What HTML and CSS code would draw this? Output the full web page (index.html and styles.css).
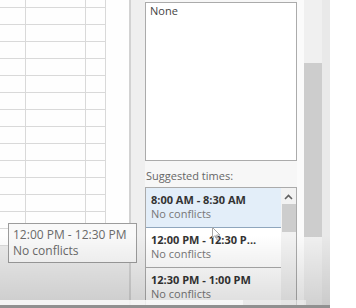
FILE: index.html
```html
<!DOCTYPE html>
<html lang="en">
<head>
<meta charset="utf-8">
<title>Suggested times</title>
<link rel="stylesheet" href="styles.css">
</head>
<body>
<div class="app">
  <div class="calendar">
    <div class="cal-top">
      <div class="grid">
        <div class="row first"><div class="c1"></div><div class="c2"></div><div class="c3"></div></div>
        <div class="row"><div class="c1"></div><div class="c2"></div><div class="c3"></div></div>
        <div class="row"><div class="c1"></div><div class="c2"></div><div class="c3"></div></div>
        <div class="row"><div class="c1"></div><div class="c2"></div><div class="c3"></div></div>
        <div class="row"><div class="c1"></div><div class="c2"></div><div class="c3"></div></div>
        <div class="row"><div class="c1"></div><div class="c2"></div><div class="c3"></div></div>
        <div class="row"><div class="c1"></div><div class="c2"></div><div class="c3"></div></div>
        <div class="row"><div class="c1"></div><div class="c2"></div><div class="c3"></div></div>
        <div class="row"><div class="c1"></div><div class="c2"></div><div class="c3"></div></div>
        <div class="row"><div class="c1"></div><div class="c2"></div><div class="c3"></div></div>
        <div class="row"><div class="c1"></div><div class="c2"></div><div class="c3"></div></div>
        <div class="row"><div class="c1"></div><div class="c2"></div><div class="c3"></div></div>
        <div class="row"><div class="c1"></div><div class="c2"></div><div class="c3"></div></div>
        <div class="row"><div class="c1"></div><div class="c2"></div><div class="c3"></div></div>
        <div class="row"><div class="c1"></div><div class="c2"></div><div class="c3"></div></div>
      </div>
    </div>
    <div class="cal-bottom"></div>
  </div>
  <div class="divider"></div>
  <div class="gutter"></div>
  <div class="panel">
    <div class="none-box">None</div>
    <div class="label">Suggested times:</div>
    <div class="list">
      <div class="items">
        <div class="item active">
          <div class="time">8:00 AM - 8:30 AM</div>
          <div class="status">No conflicts</div>
        </div>
        <div class="item">
          <div class="time">12:00 PM - 12:30 P...</div>
          <div class="status">No conflicts</div>
        </div>
        <div class="item">
          <div class="time">12:30 PM - 1:00 PM</div>
          <div class="status">No conflicts</div>
        </div>
      </div>
      <div class="list-scroll">
        <div class="arrow">
          <svg width="9" height="6" viewBox="0 0 9 6"><path d="M1 5 L4.5 1.5 L8 5" fill="none" stroke="#606060" stroke-width="1.6"/></svg>
        </div>
        <div class="list-thumb"></div>
      </div>
    </div>
  </div>
  <div class="gap"></div>
  <div class="vscroll"><div class="vthumb"></div></div>
  <div class="band"></div>
  <div class="blank"></div>
</div>

<div class="tooltip">
  <div>12:00 PM - 12:30 PM</div>
  <div>No conflicts</div>
</div>

<svg class="cursor" width="10" height="14" viewBox="0 0 10 14"><path d="M0.5 0.5 L0.5 11 L3 8.5 L5 13 L6.5 12.3 L4.6 8 L8 8 Z" fill="rgba(255,255,255,0.5)" stroke="#a8a8a8" stroke-width="1"/></svg>

<div class="shade"></div>
<div class="progress"><div class="played"></div><div class="buffered"></div></div>
<div class="progress-base"></div>
</body>
</html>
```

FILE: styles.css
```css
* { box-sizing: border-box; }

html, body {
  margin: 0;
  padding: 0;
}

body {
  width: 356px;
  height: 308px;
  overflow: hidden;
  position: relative;
  background: #f7f7f7;
  font-family: "Open Sans", "Noto Sans", sans-serif;
  font-size: 11px;
  color: #333;
}

.app {
  display: flex;
  height: 308px;
}

/* calendar grid */
.calendar {
  width: 129px;
  display: flex;
  flex-direction: column;
}

.cal-top {
  height: 246px;
  background: #fefefe;
}

.grid {
  width: 106px;
}

.row {
  display: flex;
  height: 17px;
  border-bottom: 1px solid #d9d9d9;
}

.row.first {
  height: 8px;
}

.c1, .c2, .c3 {
  border-right: 1px solid #d9d9d9;
}

.c1 { width: 26px; }
.c2 { width: 60px; }
.c3 { width: 20px; }

.cal-bottom {
  flex: 1;
  background: #ebebeb;
}

.divider {
  width: 2px;
  background: #d2d2d2;
}

.gutter {
  width: 14px;
  background: #efefef;
}

/* right panel */
.panel {
  width: 152px;
  padding-top: 2px;
  display: flex;
  flex-direction: column;
}

.none-box {
  height: 159px;
  border: 1px solid #ababab;
  background: #fff;
  padding: 0 4px;
  line-height: 15px;
  color: #444;
}

.label {
  margin-top: 7px;
  line-height: 15px;
  padding-left: 1px;
  color: #666;
}

.list {
  margin-top: 4px;
  flex: 1;
  border: 1px solid #ababab;
  border-bottom: none;
  background: #fff;
  display: flex;
}

.items {
  width: 135px;
}

.item {
  height: 40px;
  padding: 5px 0 0 5px;
  border-bottom: 1px solid #ababab;
  line-height: 14.5px;
  white-space: nowrap;
}

.item.active {
  background: #e3eef9;
  border-bottom-color: #8fa6bd;
}

.time {
  font-weight: 700;
  color: #333;
}

.status {
  color: #777;
  margin-top: -1px;
}

.list-scroll {
  width: 15px;
  background: #f2f2f2;
  display: flex;
  flex-direction: column;
  align-items: center;
}

.arrow {
  height: 16px;
  padding-top: 6px;
  display: flex;
  justify-content: center;
}

.list-thumb {
  width: 14px;
  height: 28px;
  background: #cdcdcd;
}

.gap {
  width: 7px;
  background: #fbfbfb;
}

.vscroll {
  width: 18px;
  background: #f0f0f0;
  padding-top: 63px;
}

.vthumb {
  height: 174px;
  background: #cdcdcd;
}

.band {
  width: 8px;
  background: #e9e9e9;
}

.blank {
  flex: 1;
  background: #fff;
}

/* tooltip overlay */
.tooltip {
  position: absolute;
  left: 8px;
  top: 223px;
  width: 129px;
  height: 40px;
  border: 1px solid #9c9c9c;
  background: #f9f9f9;
  padding: 3px 4px;
  font-size: 12px;
  line-height: 16px;
  color: #6a6a6a;
  white-space: nowrap;
}

.cursor {
  position: absolute;
  left: 212px;
  top: 227px;
}

/* video player overlays */
.shade {
  position: absolute;
  left: 0;
  top: 235px;
  width: 330px;
  height: 70px;
  background: linear-gradient(to bottom, rgba(0,0,0,0) 0%, rgba(0,0,0,0.13) 100%);
  pointer-events: none;
}

.progress {
  position: absolute;
  left: 0;
  bottom: 3px;
  width: 330px;
  height: 5px;
  display: flex;
}

.played {
  width: 243px;
  background: rgba(250,250,250,0.85);
}

.buffered {
  width: 63px;
  background: rgba(240,240,240,0.6);
}

.progress-base {
  position: absolute;
  left: 0;
  bottom: 0;
  width: 330px;
  height: 3px;
  background: #909090;
}
```
